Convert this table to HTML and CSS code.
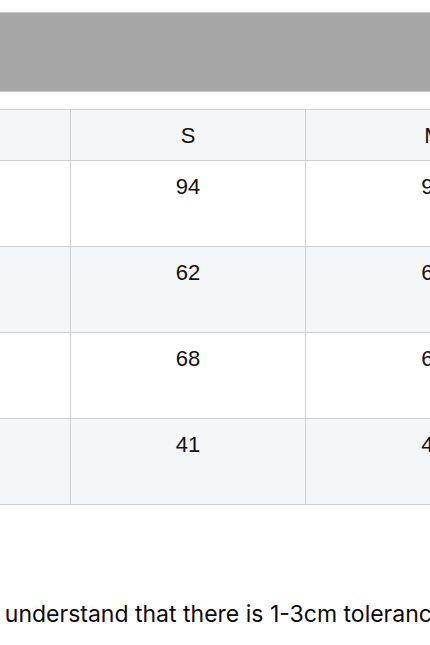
FILE: index.html
```html
<!DOCTYPE html>
<html lang="en">
<head>
<meta charset="utf-8">
<title>Size Chart</title>
<link rel="stylesheet" href="styles.css">
</head>
<body>
<div class="page">
  <div class="banner"></div>
  <table class="size-table">
    <thead>
      <tr>
        <th class="label-col"></th>
        <th class="s-col">S</th>
        <th class="m-col">M</th>
      </tr>
    </thead>
    <tbody>
      <tr>
        <td class="label">Bust<br>(cm)</td>
        <td>94</td>
        <td>98</td>
      </tr>
      <tr class="alt">
        <td class="label">Length<br>(cm)</td>
        <td>62</td>
        <td>63</td>
      </tr>
      <tr>
        <td class="label">Sleeve<br>(cm)</td>
        <td>68</td>
        <td>69</td>
      </tr>
      <tr class="alt">
        <td class="label">Shoulder<br>(cm)</td>
        <td>41</td>
        <td>42</td>
      </tr>
    </tbody>
  </table>
  <p class="note">Please understand that there is 1-3cm tolerance due to manual measurement.</p>
</div>
</body>
</html>
```

FILE: styles.css
```css
html, body {
  margin: 0;
  padding: 0;
  background: #ffffff;
  overflow: hidden;
}

body {
  font-family: "Liberation Sans", Arial, sans-serif;
  color: #111111;
}

.page {
  width: 900px;
  margin-left: -66px;
  padding-top: 12px;
}

.banner {
  height: 78px;
  background: #a5a5a5;
  border: 1px solid #c6c6c6;
}

.size-table {
  margin-top: 17px;
  border-collapse: collapse;
  border: 1px solid #d0d0d0;
  font-size: 22px;
  line-height: 35px;
}

.size-table th,
.size-table td {
  border: 1px solid #d0d0d0;
  padding: 8px 9px 7px;
  text-align: center;
  vertical-align: top;
  font-weight: normal;
  white-space: nowrap;
}

.size-table thead th {
  background: #f5f6f8;
}

.size-table tr.alt td {
  background: #f5f6f8;
}

.label-col {
  width: 117px;
}

.s-col {
  width: 216px;
}

.m-col {
  width: 237px;
}

.size-table td.label {
  text-align: left;
  color: #ffffff;
}

.size-table tr.alt td.label {
  color: #f5f6f8;
}

.note {
  margin: 93px 0 0 -8px;
  font-family: Inter, "Liberation Sans", sans-serif;
  font-size: 23px;
  line-height: 33px;
  white-space: nowrap;
  color: #0a0a0a;
}
```
